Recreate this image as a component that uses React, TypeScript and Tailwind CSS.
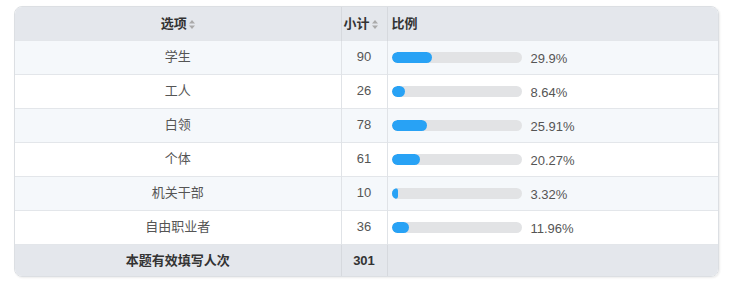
import React from 'react';

const rows = [
  { name: '学生', count: 90, pct: '29.9%', value: 29.9 },
  { name: '工人', count: 26, pct: '8.64%', value: 8.64 },
  { name: '白领', count: 78, pct: '25.91%', value: 25.91 },
  { name: '个体', count: 61, pct: '20.27%', value: 20.27 },
  { name: '机关干部', count: 10, pct: '3.32%', value: 3.32 },
  { name: '自由职业者', count: 36, pct: '11.96%', value: 11.96 },
];

function SortIcon() {
  return (
    <svg width="6" height="9" viewBox="0 0 6 9" className="inline-block ml-[2px] align-[-1px]">
      <path d="M3 0 L6 3.5 L0 3.5 Z" fill="#aaa" />
      <path d="M3 9 L6 5.5 L0 5.5 Z" fill="#aaa" />
    </svg>
  );
}

export default function App() {
  return (
    <div
      className="w-[735px] h-[289px] bg-white pt-[6px] pl-[14px]"
      style={{ fontFamily: '"Liberation Sans", Arial, "Noto Sans CJK SC", sans-serif' }}
    >
      <div className="w-[705px] rounded-[8px] border border-[#dcdfe3] overflow-hidden shadow-[1px_1px_2px_rgba(0,0,0,0.08)]">
        <table className="w-full border-collapse text-[13px] text-[#555]">
          <thead>
            <tr className="bg-[#e4e7ec] h-[33px] text-[#333] font-bold">
              <th className="w-[326px] text-center font-bold border-r border-[#d6d9de]">
                选项<SortIcon />
              </th>
              <th className="w-[46px] text-left pl-[2px] font-bold border-r border-[#d6d9de]">
                小计<SortIcon />
              </th>
              <th className="text-left pl-[4px] font-bold">比例</th>
            </tr>
          </thead>
          <tbody>
            {rows.map((r, i) => (
              <tr
                key={r.name}
                className={`h-[34px] border-t border-[#e3e6ea] ${i % 2 === 0 ? 'bg-[#f5f8fb]' : 'bg-white'}`}
              >
                <td className="text-center border-r border-[#e0e3e7]">{r.name}</td>
                <td className="text-center border-r border-[#e0e3e7]">{r.count}</td>
                <td className="pl-[4px]">
                  <div className="flex items-center">
                    <div className="w-[130px] h-[11px] rounded-full bg-[#e2e3e5] overflow-hidden">
                      <div
                        className="h-full rounded-full bg-[#28a2f5]"
                        style={{ width: `calc(${r.value}% + 2px)` }}
                      />
                    </div>
                    <span className="ml-[9px] mt-[3px]">{r.pct}</span>
                  </div>
                </td>
              </tr>
            ))}
            <tr className="h-[32px] bg-[#e4e7ec] text-[#333] font-bold border-t border-[#e3e6ea]">
              <td className="text-center border-r border-[#d6d9de]">本题有效填写人次</td>
              <td className="text-center border-r border-[#d6d9de]">301</td>
              <td></td>
            </tr>
          </tbody>
        </table>
      </div>
    </div>
  );
}
